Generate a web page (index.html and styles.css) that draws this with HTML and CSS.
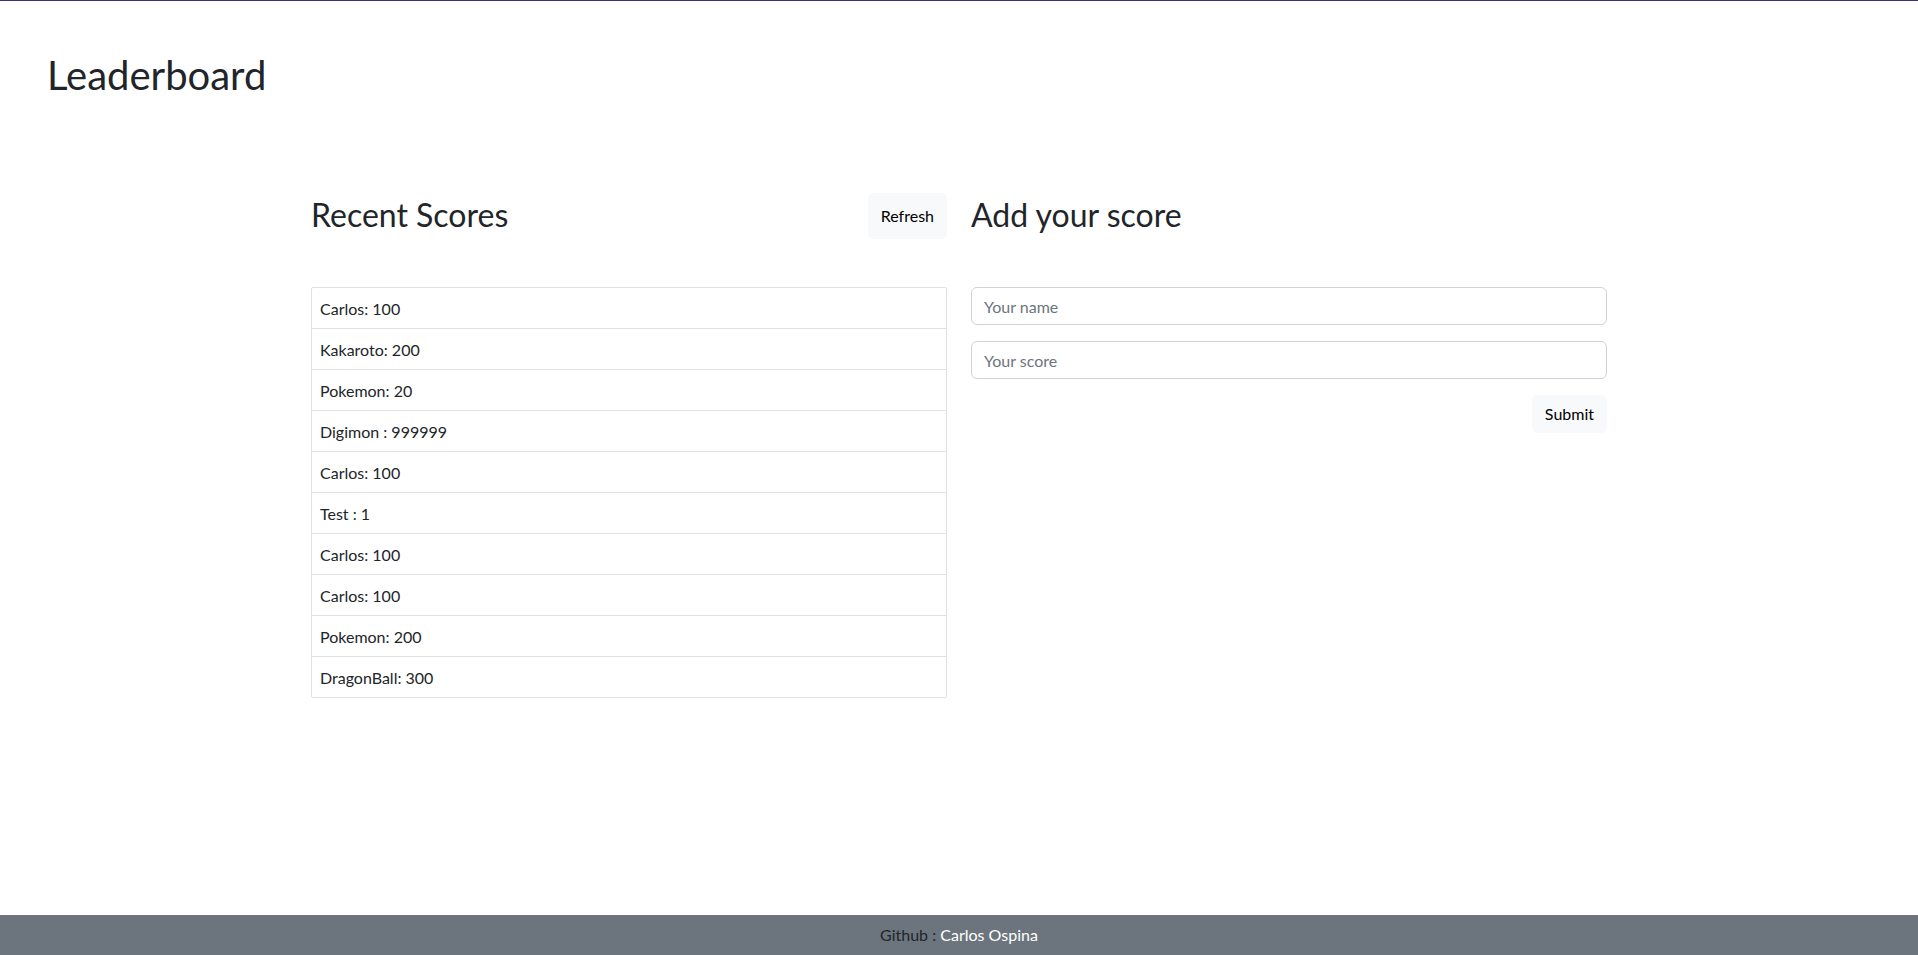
FILE: index.html
```html
<!DOCTYPE html>
<html lang="en">
<head>
<meta charset="utf-8">
<title>Leaderboard</title>
<link rel="stylesheet" href="styles.css">
</head>
<body>
  <header class="top">
    <h1 class="title">Leaderboard</h1>
  </header>
  <main class="container">
    <div class="row">
      <section class="col">
        <div class="col-head">
          <h2 class="heading">Recent Scores</h2>
          <button class="btn" type="button">Refresh</button>
        </div>
        <ul class="scores">
          <li class="score">Carlos: 100</li>
          <li class="score">Kakaroto: 200</li>
          <li class="score">Pokemon: 20</li>
          <li class="score">Digimon : 999999</li>
          <li class="score">Carlos: 100</li>
          <li class="score">Test : 1</li>
          <li class="score">Carlos: 100</li>
          <li class="score">Carlos: 100</li>
          <li class="score">Pokemon: 200</li>
          <li class="score">DragonBall: 300</li>
        </ul>
      </section>
      <section class="col">
        <div class="col-head">
          <h2 class="heading">Add your score</h2>
        </div>
        <form class="form">
          <input class="field" type="text" placeholder="Your name">
          <input class="field" type="text" placeholder="Your score">
          <div class="actions">
            <button class="btn btn-submit" type="button">Submit</button>
          </div>
        </form>
      </section>
    </div>
  </main>
  <footer class="footer">
    <span class="footer-label">Github :</span> <a class="footer-link" href="#">Carlos Ospina</a>
  </footer>
</body>
</html>
```

FILE: styles.css
```css
* { box-sizing: border-box; }

html, body { height: 100%; }

body {
  margin: 0;
  border-top: 1px solid #3a2f70;
  font-family: Lato, "Open Sans", Arial, sans-serif;
  font-size: 16px;
  line-height: 1.5;
  color: #212529;
  background: #fff;
  display: flex;
  flex-direction: column;
  min-height: 100vh;
}

.top {
  padding: 50px 47px 0;
}

.title {
  margin: 0 0 8px;
  font-size: 40px;
  font-weight: 400;
  line-height: 1.2;
}

.container {
  width: 100%;
  max-width: 1320px;
  margin: 86px auto 0;
  padding: 0 12px;
}

.row {
  display: flex;
  margin: 0 -12px;
}

.col {
  flex: 0 0 50%;
  padding: 0 12px;
}

.col-head {
  display: flex;
  justify-content: space-between;
}

.heading {
  margin: 0 0 5px;
  padding-top: 3px;
  font-size: 32px;
  font-weight: 400;
  line-height: 1.2;
}

.btn {
  font: inherit;
  font-size: 16px;
  line-height: 24px;
  padding: 6px 12px;
  color: #000;
  background: #f8f9fa;
  border: 1px solid #f8f9fa;
  border-radius: 6px;
  cursor: pointer;
}

.scores {
  list-style: none;
  margin: 48px 0 0;
  padding: 0;
  border: 1px solid #dee2e6;
  border-radius: 2px;
}

.score {
  padding: 9px 8px 7px;
  line-height: 24px;
  border-top: 1px solid #dee2e6;
}

.score:first-child { border-top: 0; }

.form {
  margin-top: 48px;
  display: flex;
  flex-direction: column;
  gap: 16px;
}

.field {
  display: block;
  width: 100%;
  height: 38px;
  padding: 6px 12px;
  font: inherit;
  font-size: 16px;
  line-height: 24px;
  color: #212529;
  border: 1px solid #ced4da;
  border-radius: 6px;
  background: #fff;
}

.field::placeholder { color: #6c757d; }

.actions {
  display: flex;
  justify-content: flex-end;
}

.footer {
  margin-top: auto;
  background: #6c757d;
  text-align: center;
  padding: 8px;
  line-height: 24px;
  font-size: 16px;
}

.footer-label { color: #212529; }

.footer-link {
  color: #fff;
  text-decoration: none;
}
```
